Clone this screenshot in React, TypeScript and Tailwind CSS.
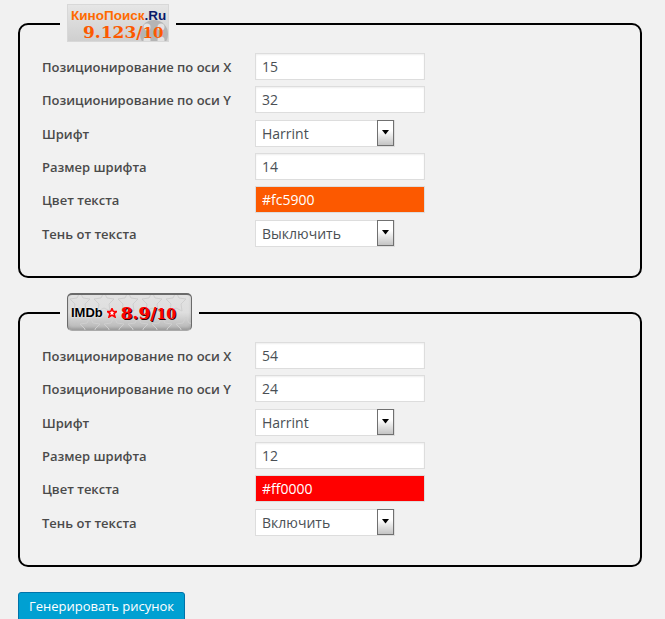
import type { ReactNode } from 'react';

const inputClass =
  'block h-[27px] w-[170px] border border-[#ddd] bg-white px-[6px] text-[14px] text-[#4a4f54] shadow-[inset_0_1px_2px_rgba(0,0,0,0.07)] outline-none';

function Row({ label, children }: { label: string; children: ReactNode }) {
  return (
    <div className="flex items-center">
      <label className="w-[213px] shrink-0 pt-[2.6px] text-[13px] font-semibold text-[#4a4a4a]">{label}</label>
      {children}
    </div>
  );
}

function TextField({ value }: { value: string }) {
  return <input className={inputClass} defaultValue={value} />;
}

function ColorField({ value, bg }: { value: string; bg: string }) {
  return (
    <input
      className={`block h-[27px] w-[170px] border border-[#ddd] px-[6px] text-[14px] text-white outline-none ${bg}`}
      defaultValue={value}
    />
  );
}

function SelectField({ value }: { value: string }) {
  return (
    <div className="relative h-[27px] w-[140px]">
      <select
        defaultValue={value}
        className="block h-full w-full appearance-none border border-[#ddd] bg-white px-[6px] text-[14px] text-[#4a4f54] outline-none"
      >
        <option>{value}</option>
      </select>
      <div className="pointer-events-none absolute right-[1px] top-0 flex h-[26px] w-[17px] flex-col items-center border border-[#707070] bg-gradient-to-b from-white from-40% to-[#c4c4c4]">
        <svg width="9" height="5" viewBox="0 0 9 5" className="mt-[9px]">
          <path d="M1 0h7L4.5 4.5z" fill="#000" />
        </svg>
      </div>
    </div>
  );
}

function KinopoiskLogo() {
  return (
    <div className="relative block h-[38px] w-[102px] overflow-hidden border border-[#d8d8d8] bg-gradient-to-b from-[#e6e6e6] to-[#cfcfcf] font-['Liberation_Sans',sans-serif]">
      <svg width="34" height="24" viewBox="0 0 34 24" className="absolute bottom-0 right-0">
        <circle cx="20" cy="17" r="14" fill="#b4b4b4" />
        <circle cx="13" cy="10" r="3.5" fill="#e2e2e2" />
        <circle cx="27" cy="10" r="3.5" fill="#e2e2e2" />
        <circle cx="13" cy="23" r="3.5" fill="#e2e2e2" />
        <circle cx="27" cy="23" r="3.5" fill="#e2e2e2" />
      </svg>
      <div className="absolute left-[3px] top-[4px] text-[13.5px] font-bold leading-[13px] whitespace-nowrap text-[#ff6a00]">
        КиноПоиск<span className="text-[#0a1a6a]">.Ru</span>
      </div>
      <div className="absolute left-[15px] top-[17px] font-['DejaVu_Serif',serif] text-[17px] font-bold leading-[20px] whitespace-nowrap text-[#fc5900]">
        9.123/<span className="text-[15px]">10</span>
      </div>
    </div>
  );
}

function ImdbLogo() {
  const stars = [12, 36, 60, 84, 108];
  return (
    <div className="relative block h-[38px] w-[125px] overflow-hidden rounded-[5px] border border-t-2 border-[#6a6a6a] border-b-[#aaa] bg-gradient-to-b from-[#e2e2e2] via-[#dedede] to-[#b4b4b4] font-['Liberation_Sans',sans-serif] shadow-[inset_0_-2px_3px_rgba(0,0,0,0.15)]">
      <svg width="125" height="38" viewBox="0 0 125 38" className="absolute left-0 top-0">
        {stars.map((x) => (
          <g key={x} fill="none" stroke="#cfcfcf" strokeWidth="1">
            <path d={`M${x} -3l3 6 7 1-5 5 1 7-6-3-6 3 1-7-5-5 7-1z`} />
            <path d={`M${x + 10} 22l3 6 7 1-5 5 1 7-6-3-6 3 1-7-5-5 7-1z`} />
          </g>
        ))}
      </svg>
      <div className="absolute left-[3px] top-[9px] flex items-center whitespace-nowrap leading-[18px]">
        <span className="text-[13px] font-bold text-black [text-shadow:0_0_2px_#fff]">IMDb</span>
        <svg width="10" height="10" viewBox="0 0 10 10" className="ml-[4px]">
          <path d="M5 .5l1.3 3H9.6L7 5.6l1 3.4L5 7.1 2 9l1-3.4L.4 3.5h3.3z" fill="#fff" stroke="#f00" strokeWidth="1.6" />
        </svg>
        <span className="ml-[4px] font-['DejaVu_Serif',serif] text-[17px] font-bold text-[#f00] [text-shadow:1px_1px_0_#300]">
          8.9/<span className="text-[14px]">10</span>
        </span>
      </div>
    </div>
  );
}

type Settings = {
  x: string;
  y: string;
  size: string;
  color: string;
  colorBg: string;
  shadow: string;
  logo: ReactNode;
};

function Group({ x, y, size, color, colorBg, shadow, logo }: Settings) {
  return (
    <fieldset className="w-[624px] rounded-[10px] border-2 border-black">
      <legend className="ml-[40px] px-[7px] pb-[2px]">{logo}</legend>
      <div className="flex flex-col gap-[6.33px] pb-[29.35px] pl-[22px] pt-[9px]">
        <Row label="Позиционирование по оси X">
          <TextField value={x} />
        </Row>
        <Row label="Позиционирование по оси Y">
          <TextField value={y} />
        </Row>
        <Row label="Шрифт">
          <SelectField value="Harrint" />
        </Row>
        <Row label="Размер шрифта">
          <TextField value={size} />
        </Row>
        <Row label="Цвет текста">
          <ColorField value={color} bg={colorBg} />
        </Row>
        <Row label="Тень от текста">
          <SelectField value={shadow} />
        </Row>
      </div>
    </fieldset>
  );
}

export default function App() {
  return (
    <div className="h-[619px] overflow-hidden bg-[#f1f1f1] pl-[18px] pt-[4px] font-['Open_Sans',sans-serif]">
      <div className="flex flex-col gap-[15px]">
        <Group
          x="15"
          y="32"
          size="14"
          color="#fc5900"
          colorBg="bg-[#fc5900]"
          shadow="Выключить"
          logo={<KinopoiskLogo />}
        />
        <Group
          x="54"
          y="24"
          size="12"
          color="#ff0000"
          colorBg="bg-[#ff0000]"
          shadow="Включить"
          logo={<ImdbLogo />}
        />
      </div>
      <button className="mt-[25px] h-[30px] w-[167px] rounded-[3px] border border-[#0073aa] bg-[#00a0d2] text-[13px] text-white">
        Генерировать рисунок
      </button>
    </div>
  );
}
